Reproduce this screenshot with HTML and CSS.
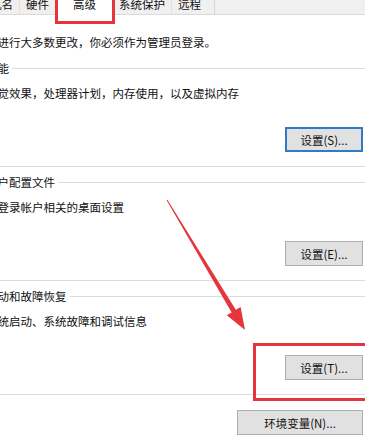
FILE: index.html
```html
<!DOCTYPE html>
<html lang="zh-CN">
  <head>
    <meta charset="UTF-8" />
    <meta name="viewport" content="width=device-width, initial-scale=1.0" />
    <title>系统属性 - 高级</title>
    <link rel="stylesheet" href="styles.css">
  </head>
  <body>
    <div class="tabs">
      <div class="tab tab-first">计算机名</div>
      <div class="tab">硬件</div>
      <div class="tab active">高级</div>
      <div class="tab">系统保护</div>
      <div class="tab tab-last">远程</div>
    </div>

    <div class="panel">
      <p class="intro">要进行大多数更改，你必须作为管理员登录。</p>

      <div class="group">
        <div class="group-title">性能</div>
        <p class="group-desc">视觉效果，处理器计划，内存使用，以及虚拟内存</p>
        <div class="group-actions">
          <button class="btn btn-default">设置(S)...</button>
        </div>
      </div>

      <div class="group">
        <div class="group-title">用户配置文件</div>
        <p class="group-desc">与登录帐户相关的桌面设置</p>
        <div class="group-actions">
          <button class="btn">设置(E)...</button>
        </div>
      </div>

      <div class="group">
        <div class="group-title">启动和故障恢复</div>
        <p class="group-desc">系统启动、系统故障和调试信息</p>
        <div class="group-actions">
          <button class="btn">设置(T)...</button>
        </div>
      </div>

      <div class="panel-footer">
        <button class="btn btn-wide">环境变量(N)...</button>
      </div>
    </div>

    <!-- annotations drawn over the dialog -->
    <div class="mark mark-tab"></div>
    <div class="mark mark-button"></div>
    <svg class="arrow" width="365" height="440" viewBox="0 0 365 440">
      <polygon
        points="166.6,200.3 231.6,312.4 226.8,315.2 245,330 240.6,307 235.8,309.8 167.4,199.7"
        fill="#e6353b"
      />
    </svg>
  </body>
</html>
```

FILE: styles.css
```css
* {
  margin: 0;
  padding: 0;
  box-sizing: border-box;
}

body {
  font-family: "Microsoft YaHei", "Noto Sans CJK SC", sans-serif;
  font-size: 11.5px;
  color: #111111;
  background: #ffffff;
  width: 365px;
  height: 440px;
  overflow: hidden;
  position: relative;
}

/* Tab strip */
.tabs {
  display: flex;
  height: 21px;
  margin-top: -6px;
  margin-left: -39px;
  background: #f0f0f0;
  border-bottom: 1px solid #dadada;
}

.tab {
  padding: 0 6px;
  line-height: 20px;
  white-space: nowrap;
  border-right: 1px solid #e0e0e0;
}

.tab.active {
  padding: 0 16px;
  background: #ffffff;
  height: 22px;
  border-left: 1px solid #d9d9d9;
  border-right: 1px solid #d9d9d9;
}

.tab-last {
  padding-right: 13px;
  border-right: 1px solid #d6d6d6;
}

/* Dialog body */
.panel {
  margin-left: -24px;
  width: 397px;
}

.intro {
  line-height: 16px;
  margin-top: 19px;
  padding-left: 10px;
}

.group {
  margin-top: 10px;
  padding: 0 10px 14px 7px;
  border-bottom: 1px solid #dcdcdc;
}

.group + .group {
  margin-top: 7px;
}

.group-title {
  display: flex;
  align-items: center;
  gap: 3px;
  line-height: 16px;
  margin-left: -7px;
}

.group-title::before {
  content: "";
  width: 7px;
  height: 1px;
  background: #dcdcdc;
}

.group-title::after {
  content: "";
  flex: 1;
  height: 1px;
  background: #dcdcdc;
  margin-right: -10px;
}

.group-desc {
  line-height: 16px;
  margin-top: 9px;
  padding-left: 3px;
}

.group-actions {
  display: flex;
  justify-content: flex-end;
  margin-top: 26px;
}

.panel-footer {
  display: flex;
  justify-content: flex-end;
  padding-right: 10px;
  margin-top: 15px;
}

.btn {
  width: 78px;
  height: 25px;
  font-family: inherit;
  font-size: 11.5px;
  color: #111111;
  background: #e1e1e1;
  border: 1px solid #adadad;
}

.btn-default {
  border: 2px solid #2f7bc4;
}

.btn-wide {
  width: 126px;
}

/* Red annotations */
.mark {
  position: absolute;
  border: 3px solid #e3363c;
}

.mark-tab {
  left: 55px;
  top: -3px;
  width: 60px;
  height: 27px;
}

.mark-button {
  left: 253px;
  top: 343px;
  width: 120px;
  height: 58px;
}

.arrow {
  position: absolute;
  left: 0;
  top: 0;
  pointer-events: none;
}
```
